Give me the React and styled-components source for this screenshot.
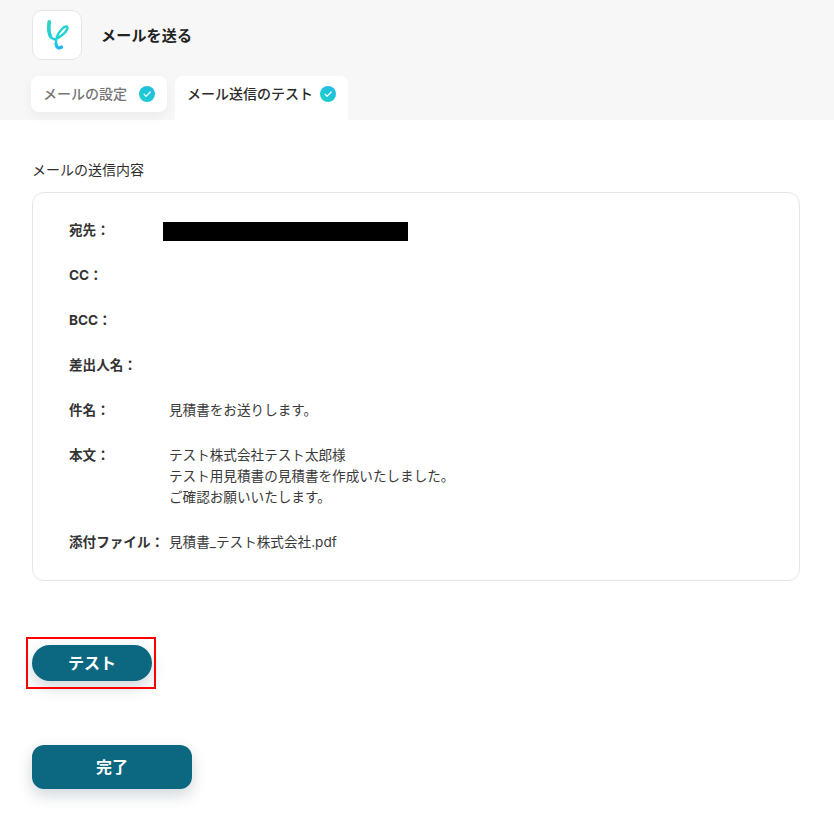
import React from "react";
import styled, { createGlobalStyle } from "styled-components";

const Global = createGlobalStyle`
  html, body { margin: 0; padding: 0; background: #fff; }
  body { font-family: Inter, "Noto Sans CJK JP", "Noto Sans", sans-serif; color: #2b2b2b; }
  * { box-sizing: border-box; }
`;

const Page = styled.div`
  width: 834px;
  height: 814px;
  overflow: hidden;
`;

const Header = styled.header`
  height: 120px;
  background: #f7f7f7;
  padding: 10px 0 0 32px;
  display: flex;
  flex-direction: column;
`;

const TitleRow = styled.div`
  display: flex;
  align-items: center;
  gap: 19px;
  height: 50px;
`;

const AppIcon = styled.div`
  width: 50px;
  height: 50px;
  background: #fff;
  border: 1px solid #e6e6e6;
  border-radius: 10px;
  display: flex;
  align-items: center;
  justify-content: center;
`;

const Title = styled.h1`
  margin: 0 0 2px;
  font-size: 15px;
  font-weight: 700;
  color: #222;
  letter-spacing: 0.2px;
`;

const Tabs = styled.div`
  display: flex;
  align-items: flex-start;
  gap: 8px;
  margin: 16px 0 0 -1px;
`;

const Tab = styled.div`
  height: ${(p) => (p.$active ? "44px" : "36px")};
  width: ${(p) => (p.$active ? "173px" : "136px")};
  padding: ${(p) => (p.$active ? "0 12px 10px 12px" : "0 12px 2px")};
  display: flex;
  align-items: center;
  justify-content: space-between;
  background: #fff;
  border-radius: ${(p) => (p.$active ? "8px 8px 0 0" : "8px")};
  box-shadow: ${(p) => (p.$active ? "none" : "0 4px 12px rgba(0,0,0,0.05)")};
  color: ${(p) => (p.$active ? "#2b2b2b" : "#757575")};
  font-size: 14px;
  font-weight: 500;

  svg {
    position: relative;
    top: 1px;
  }
`;

const Main = styled.main`
  padding: 40px 34px 0 32px;
`;

const SectionLabel = styled.div`
  font-size: 14px;
  line-height: 20px;
  font-weight: 400;
  color: #2f2f2f;
  margin-bottom: 12px;
`;

const Card = styled.section`
  height: 389px;
  border: 1px solid #e6e6e6;
  border-radius: 12px;
  padding: 27px 36px;
  display: flex;
  flex-direction: column;
  gap: 24px;
`;

const Row = styled.div`
  display: grid;
  grid-template-columns: 100px 1fr;
  font-size: 13.6px;
  line-height: 21px;
  position: relative;
`;

const Label = styled.div`
  font-weight: 700;
  color: #333;
`;

const Value = styled.div`
  color: #3a3a3a;
`;

const Redaction = styled.div`
  position: absolute;
  left: 94px;
  top: 2px;
  width: 245px;
  height: 19px;
  background: #000;
`;

const TestArea = styled.div`
  position: relative;
  width: 120px;
  margin-top: 64px;
`;

const Highlight = styled.div`
  position: absolute;
  left: -6px;
  top: -8px;
  width: 130px;
  height: 52px;
  border: 2px solid #f00;
  pointer-events: none;
`;

const Button = styled.button`
  display: block;
  border: 0;
  padding: 0 0 2px;
  font-family: inherit;
  font-weight: 700;
  color: #fff;
  background: #0b6880;
  box-shadow: 0 6px 16px rgba(11, 50, 70, 0.2);
  width: ${(p) => (p.$wide ? "160px" : "120px")};
  height: ${(p) => (p.$wide ? "44px" : "36px")};
  border-radius: ${(p) => (p.$wide ? "12px" : "18px")};
  font-size: 16px;
  margin-top: ${(p) => (p.$wide ? "64px" : "0")};
`;

const Check = () => (
  <svg width="16" height="16" viewBox="0 0 16 16">
    <defs>
      <linearGradient id="chk" x1="0" y1="1" x2="1" y2="0">
        <stop offset="0" stopColor="#1dd3c8" />
        <stop offset="1" stopColor="#22b8e6" />
      </linearGradient>
    </defs>
    <circle cx="8" cy="8" r="8" fill="url(#chk)" />
    <path d="M5 8.2l2.1 2.1L11.2 6" fill="none" stroke="#fff" strokeWidth="1.2" strokeLinecap="round" strokeLinejoin="round" />
  </svg>
);

const Logo = () => (
  <svg width="26" height="32" viewBox="-2 0 26 32">
    <defs>
      <linearGradient id="lg" gradientUnits="userSpaceOnUse" x1="4" y1="2" x2="12" y2="30">
        <stop offset="0" stopColor="#2bd4c8" />
        <stop offset="0.7" stopColor="#1fd0da" />
        <stop offset="1" stopColor="#1cb4f4" />
      </linearGradient>
    </defs>
    <path
      d="M3.2 2.8C2.6 8 2.6 14 4.5 17.5C6 20.5 9 21 12 19C16 16.5 21 12 21.5 9C21.8 7 19 6.5 16 10C12 14 9.5 20 10 25C10.3 28.5 13 30 15.5 28"
      fill="none"
      stroke="url(#lg)"
      strokeWidth="2.4"
      strokeLinecap="round"
      strokeLinejoin="round"
    />
    <path
      d="M3.2 2.8C2.6 8 2.6 14 4.5 17.5"
      fill="none"
      stroke="url(#lg)"
      strokeWidth="3.6"
      strokeLinecap="round"
    />
    <path
      d="M10 25C10.3 28.5 13 30 15.5 28"
      fill="none"
      stroke="url(#lg)"
      strokeWidth="3.2"
      strokeLinecap="round"
    />
  </svg>
);

const rows = [
  { label: "CC：" },
  { label: "BCC：" },
  { label: "差出人名：" },
  { label: "件名：", value: ["見積書をお送りします。"] },
  {
    label: "本文：",
    value: ["テスト株式会社テスト太郎様", "テスト用見積書の見積書を作成いたしました。", "ご確認お願いいたします。"],
  },
  { label: "添付ファイル：", value: ["見積書_テスト株式会社.pdf"] },
];

export default function App() {
  return (
    <Page>
      <Global />
      <Header>
        <TitleRow>
          <AppIcon>
            <Logo />
          </AppIcon>
          <Title>メールを送る</Title>
        </TitleRow>
        <Tabs>
          <Tab>
            メールの設定
            <Check />
          </Tab>
          <Tab $active>
            メール送信のテスト
            <Check />
          </Tab>
        </Tabs>
      </Header>
      <Main>
        <SectionLabel>メールの送信内容</SectionLabel>
        <Card>
          <Row>
            <Label>宛先：</Label>
            <Value />
            <Redaction />
          </Row>
          {rows.map((r) => (
            <Row key={r.label}>
              <Label>{r.label}</Label>
              <Value>
                {(r.value || []).map((line) => (
                  <div key={line}>{line}</div>
                ))}
              </Value>
            </Row>
          ))}
        </Card>
        <TestArea>
          <Button>テスト</Button>
          <Highlight />
        </TestArea>
        <Button $wide>完了</Button>
      </Main>
    </Page>
  );
}
